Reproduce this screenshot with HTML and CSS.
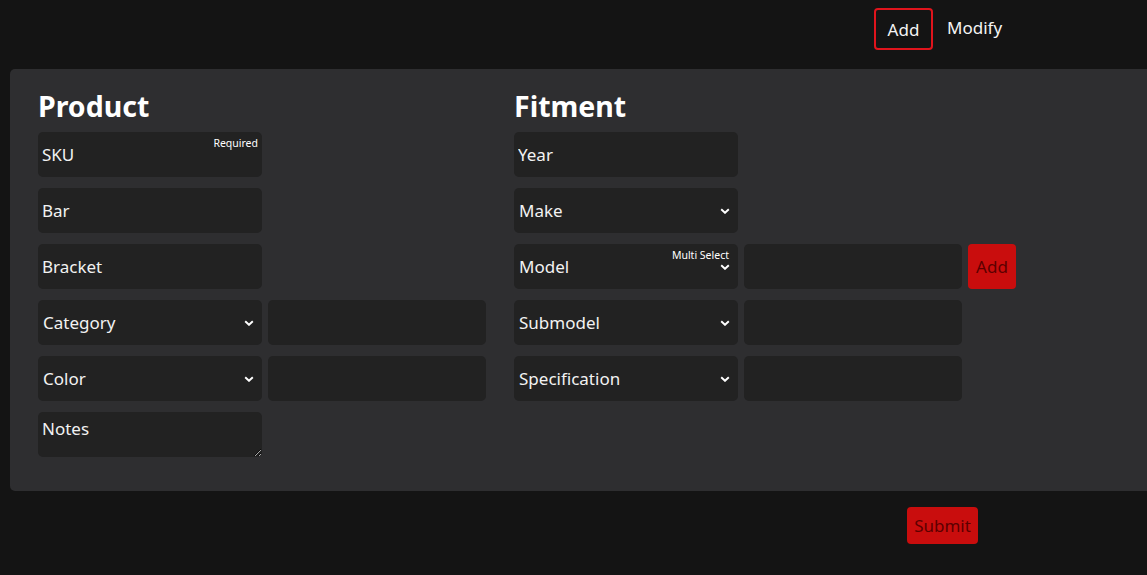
FILE: index.html
```html
<!DOCTYPE html>
<html>
<head>
<meta charset="utf-8">
<link rel="stylesheet" href="styles.css">
</head>
<body>
<nav class="topnav">
  <button class="tab tab-active">Add</button>
  <button class="tab tab-plain">Modify</button>
</nav>
<main class="panel">
  <section class="col col-product">
    <h2 class="heading">Product</h2>
    <div class="row">
      <div class="field">
        <input class="inp" value="SKU">
        <span class="tag">Required</span>
      </div>
    </div>
    <div class="row"><div class="field"><input class="inp" value="Bar"></div></div>
    <div class="row"><div class="field"><input class="inp" value="Bracket"></div></div>
    <div class="row">
      <div class="field">
        <select class="inp sel"><option>Category</option></select>
        <svg class="chev" viewBox="0 0 10 6"><path d="M1.2 1.2 L5 4.8 L8.8 1.2" fill="none" stroke="#fff" stroke-width="1.9"/></svg>
      </div>
      <div class="field field-wide"><input class="inp"></div>
    </div>
    <div class="row">
      <div class="field">
        <select class="inp sel"><option>Color</option></select>
        <svg class="chev" viewBox="0 0 10 6"><path d="M1.2 1.2 L5 4.8 L8.8 1.2" fill="none" stroke="#fff" stroke-width="1.9"/></svg>
      </div>
      <div class="field field-wide"><input class="inp"></div>
    </div>
    <div class="row">
      <div class="field"><textarea class="inp area">Notes</textarea></div>
    </div>
  </section>
  <section class="col col-fitment">
    <h2 class="heading">Fitment</h2>
    <div class="row"><div class="field"><input class="inp" value="Year"></div></div>
    <div class="row">
      <div class="field">
        <select class="inp sel"><option>Make</option></select>
        <svg class="chev" viewBox="0 0 10 6"><path d="M1.2 1.2 L5 4.8 L8.8 1.2" fill="none" stroke="#fff" stroke-width="1.9"/></svg>
      </div>
    </div>
    <div class="row">
      <div class="field">
        <select class="inp sel"><option>Model</option></select>
        <span class="tag tag-multi">Multi Select</span>
        <svg class="chev" viewBox="0 0 10 6"><path d="M1.2 1.2 L5 4.8 L8.8 1.2" fill="none" stroke="#fff" stroke-width="1.9"/></svg>
      </div>
      <div class="field field-wide"><input class="inp"></div>
      <button class="redbtn addbtn">Add</button>
    </div>
    <div class="row">
      <div class="field">
        <select class="inp sel"><option>Submodel</option></select>
        <svg class="chev" viewBox="0 0 10 6"><path d="M1.2 1.2 L5 4.8 L8.8 1.2" fill="none" stroke="#fff" stroke-width="1.9"/></svg>
      </div>
      <div class="field field-wide"><input class="inp"></div>
    </div>
    <div class="row">
      <div class="field">
        <select class="inp sel"><option>Specification</option></select>
        <svg class="chev" viewBox="0 0 10 6"><path d="M1.2 1.2 L5 4.8 L8.8 1.2" fill="none" stroke="#fff" stroke-width="1.9"/></svg>
      </div>
      <div class="field field-wide"><input class="inp"></div>
    </div>
  </section>
</main>
<div class="footer">
  <button class="redbtn submit">Submit</button>
</div>
</body>
</html>
```
FILE: styles.css
```css
html, body {
  margin: 0;
  padding: 0;
  background: #141414;
  color: #f2f2f2;
  font-family: "Noto Sans", "Open Sans", sans-serif;
  overflow: hidden;
  color-scheme: dark;
}
body {
  width: 1147px;
  height: 575px;
}
.topnav {
  display: flex;
  align-items: flex-start;
  height: 58px;
  padding-left: 874px;
  gap: 4px;
}
.tab {
  font-family: inherit;
  font-size: 17px;
  color: #f4f4f4;
  background: transparent;
  border: 2px solid transparent;
  border-radius: 4px;
  margin-top: 8px;
}
.tab-active {
  border-color: #e0141c;
  width: 59px;
  height: 42px;
  padding: 0;
}
.tab-plain {
  height: 38px;
  padding: 0 8px;
}
.panel {
  margin: 11px 0 0 10px;
  background: #2e2e30;
  border-radius: 5px 0 0 5px;
  padding: 18px 0 34px 28px;
  display: flex;
  gap: 28px;
}
.col {
  display: flex;
  flex-direction: column;
  gap: 11px;
}
.heading {
  margin: 0 0 -4px 0;
  font-size: 28.5px;
  font-weight: 700;
  line-height: 38px;
  color: #ffffff;
}
.row {
  display: flex;
  gap: 6px;
  height: 45px;
}
.field {
  position: relative;
  width: 224px;
  height: 45px;
}
.field-wide {
  width: 218px;
}
.inp {
  box-sizing: border-box;
  width: 100%;
  height: 45px;
  margin: 0;
  border: none;
  outline: none;
  border-radius: 5px;
  background: #222222;
  color: #f2f2f2;
  font-family: inherit;
  font-size: 17px;
  padding: 0 4px;
}
.sel {
  appearance: none;
  -webkit-appearance: none;
  padding-left: 5px;
}
.area {
  display: block;
  resize: vertical;
  padding: 4px 4px;
  line-height: 26px;
}
.chev {
  position: absolute;
  right: 8px;
  top: 20px;
  width: 10px;
  height: 6px;
  pointer-events: none;
}
.tag {
  position: absolute;
  top: 4px;
  right: 4px;
  font-size: 10.5px;
  line-height: 14px;
  color: #ffffff;
  pointer-events: none;
}
.tag-multi {
  right: 9px;
}
.redbtn {
  background: #c90d0d;
  color: #5c0000;
  border: none;
  border-radius: 4px;
  font-family: inherit;
  font-size: 17px;
  padding: 0;
}
.addbtn {
  width: 48px;
  height: 45px;
}
.footer {
  padding: 16px 0 0 907px;
}
.submit {
  width: 71px;
  height: 37px;
}
```
